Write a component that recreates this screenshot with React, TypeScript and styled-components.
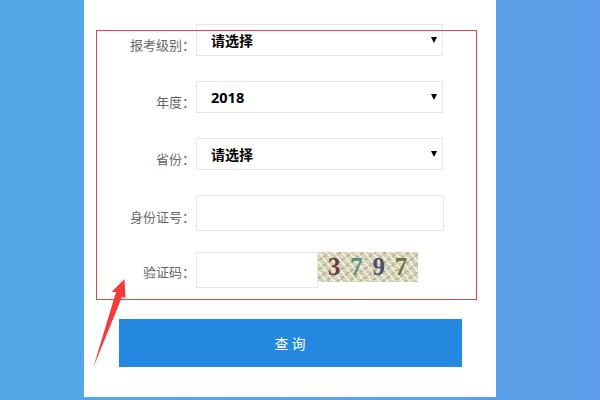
import styled, {createGlobalStyle} from 'styled-components';

const GlobalStyle = createGlobalStyle`
    html, body {
        margin: 0;
        padding: 0;
    }
    body {
        font-family: "Noto Sans CJK SC", "Noto Sans", sans-serif;
    }
`;

const Page = styled.div`
    width: 600px;
    height: 400px;
    overflow: hidden;
    background: linear-gradient(90deg, #54a8e5 0%, #5c9ce8 100%);
    display: flex;
    align-items: flex-start;
    padding-left: 84px;
    box-sizing: border-box;
`;

const Panel = styled.div`
    position: relative;
    width: 412px;
    height: 397px;
    background-color: #fff;
    padding-top: 24px;
    box-sizing: border-box;
`;

const Form = styled.form`
    display: flex;
    flex-direction: column;
`;

const Row = styled.div<{$gap: number}>`
    display: flex;
    align-items: flex-start;
    margin-bottom: ${(p) => p.$gap}px;
`;

const Label = styled.label<{$top: number}>`
    width: 112px;
    flex-shrink: 0;
    box-sizing: border-box;
    padding-right: 1px;
    padding-top: ${(p) => p.$top}px;
    text-align: right;
    font-size: 13px;
    line-height: 18px;
    color: #666;
    white-space: nowrap;
`;

const SelectWrap = styled.div`
    position: relative;
    width: 247px;
    height: 32px;
`;

const Select = styled.select<{$size: number}>`
    appearance: none;
    width: 100%;
    height: 100%;
    box-sizing: border-box;
    border: 1px solid #e6e6e6;
    border-radius: 0;
    background: #fff;
    padding: 0 0 0 14px;
    font-family: "Noto Sans", "Noto Sans CJK SC", sans-serif;
    font-size: ${(p) => p.$size}px;
    font-weight: 700;
    color: #000;
    outline: none;
`;

const Arrow = styled.span`
    position: absolute;
    right: 6px;
    top: 13px;
    width: 0;
    height: 0;
    border-left: 3.5px solid transparent;
    border-right: 3.5px solid transparent;
    border-top: 6px solid #000;
`;

const TextInput = styled.input<{$width: number}>`
    width: ${(p) => p.$width}px;
    height: 36px;
    box-sizing: border-box;
    border: 1px solid #e6e6e6;
    background: #fff;
    padding: 0 8px;
    outline: none;
`;

const Captcha = styled.div`
    width: 100px;
    height: 30px;
    display: flex;
    align-items: center;
    justify-content: space-around;
    box-sizing: border-box;
    padding: 0 6px 0 5px;
    background-color: #d2d0b0;
    background-image:
        repeating-linear-gradient(52deg, rgba(255, 255, 255, 0.55) 0 2px, transparent 2px 6px),
        repeating-linear-gradient(-38deg, rgba(110, 110, 80, 0.28) 0 2px, transparent 2px 7px),
        repeating-linear-gradient(8deg, rgba(255, 255, 240, 0.3) 0 1px, transparent 1px 3px);
    font-family: "Liberation Serif", serif;
    font-weight: 700;
    font-size: 25px;
    line-height: 30px;
`;

const Digit = styled.span<{$color: string}>`
    color: ${(p) => p.$color};
`;

const SubmitButton = styled.button`
    display: block;
    width: 343px;
    height: 48px;
    margin: 31px 0 0 35px;
    border: none;
    background-color: #2487e0;
    color: #fff;
    font-family: "Noto Sans CJK SC", sans-serif;
    font-size: 14px;
    letter-spacing: 3px;
    padding: 0 0 0 2px;
`;

const RedFrame = styled.div`
    position: absolute;
    left: 12px;
    top: 30px;
    width: 381px;
    height: 270px;
    box-sizing: border-box;
    border: 1px solid #d9484a;
    pointer-events: none;
`;

const ArrowMark = styled.svg`
    position: absolute;
    left: 8px;
    top: 278px;
    width: 40px;
    height: 92px;
`;

export default function App() {
    return (
        <Page>
            <GlobalStyle />
            <Panel>
                <Form>
                    <Row $gap={25}>
                        <Label $top={12}>报考级别：</Label>
                        <SelectWrap>
                            <Select $size={14} defaultValue="none">
                                <option value="none">请选择</option>
                            </Select>
                            <Arrow />
                        </SelectWrap>
                    </Row>
                    <Row $gap={25}>
                        <Label $top={12}>年度：</Label>
                        <SelectWrap>
                            <Select $size={14.5} defaultValue="2018">
                                <option value="2018">2018</option>
                            </Select>
                            <Arrow />
                        </SelectWrap>
                    </Row>
                    <Row $gap={25}>
                        <Label $top={12}>省份：</Label>
                        <SelectWrap>
                            <Select $size={14} defaultValue="none">
                                <option value="none">请选择</option>
                            </Select>
                            <Arrow />
                        </SelectWrap>
                    </Row>
                    <Row $gap={21}>
                        <Label $top={13}>身份证号：</Label>
                        <TextInput $width={248} />
                    </Row>
                    <Row $gap={0}>
                        <Label $top={11}>验证码：</Label>
                        <TextInput $width={122} />
                        <Captcha>
                            <Digit $color="#6e3a3e">3</Digit>
                            <Digit $color="#5f8f80">7</Digit>
                            <Digit $color="#4c4f70">9</Digit>
                            <Digit $color="#6d7040">7</Digit>
                        </Captcha>
                    </Row>
                    <SubmitButton type="button">查询</SubmitButton>
                </Form>
                <RedFrame />
                <ArrowMark viewBox="0 0 40 92">
                    <path d="M1.3 89.5 L30 19 L33.5 20 L32.5 1 L19.5 14 L24 14 Z" fill="#f63a3a" />
                </ArrowMark>
            </Panel>
        </Page>
    );
}
